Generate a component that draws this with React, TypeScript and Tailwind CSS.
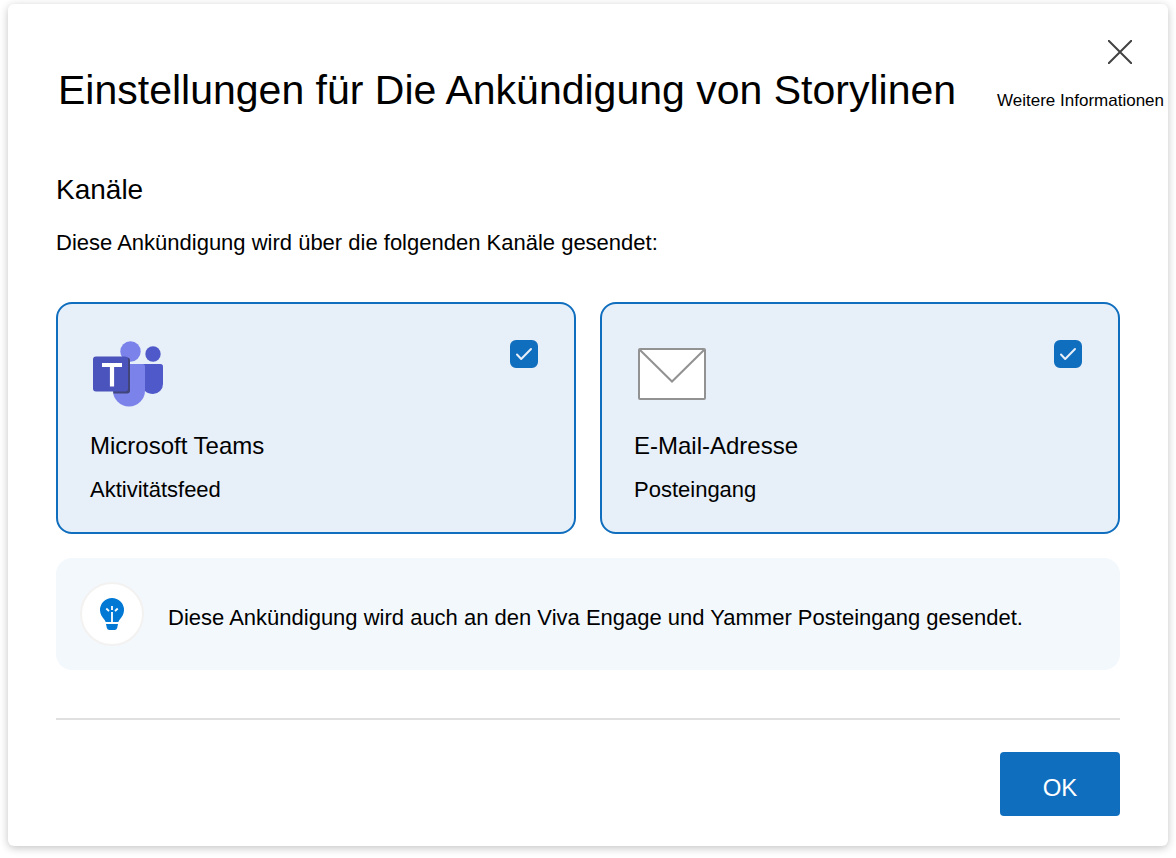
import { useState } from "react";
import type { ReactNode } from "react";

interface ChannelCardProps {
  id: string;
  title: string;
  subtitle: string;
  icon: ReactNode;
}

function TeamsIcon() {
  return (
    <svg width="72" height="68" viewBox="0 0 72 68" aria-hidden="true">
      <circle cx="61" cy="14" r="7.7" fill="#5059c9" />
      <path d="M50 24h18.500a2.500 2.500 0 0 1 2.500 2.500V44a10 10 0 0 1-10 10c-6 0-11-4-11-10z" fill="#5059c9" />
      <circle cx="38.500" cy="11.500" r="10.200" fill="#7b83eb" />
      <path d="M21 24h29.500a2.500 2.500 0 0 1 2.500 2.500V50.500a16 16 0 0 1-32 0z" fill="#7b83eb" />
      <path d="M21 17.500h14a3 3 0 0 1 3 3V50.500a3 3 0 0 1-3 3H21.300z" fill="#414579" />
      <rect x="1" y="16.500" width="35" height="35" rx="3" fill="#4b53bc" />
      <path d="M10 23h20v4h-7.900v19.500h-4.200V27H10z" fill="#fff" />
    </svg>
  );
}

function MailIcon() {
  return (
    <svg width="68" height="52" viewBox="0 0 68 52" fill="none" stroke="#929292" strokeWidth="2" aria-hidden="true">
      <rect x="1" y="1" width="66" height="50" rx="1" fill="#fff" />
      <path d="M2 2l32 31.500L66 2" />
    </svg>
  );
}

function BulbIcon() {
  return (
    <svg width="24" height="32" viewBox="0 0 24 32" aria-hidden="true">
      <path d="M12 0a12 12 0 0 1 12 12c0 4-2 6.800-4 9.200-1 1.200-1.300 1.800-1.600 2.800H5.600c-.3-1-.6-1.600-1.600-2.800C2 18.800 0 16 0 12A12 12 0 0 1 12 0z" fill="#0078d4" />
      <path d="M6 26h12l-.8 3.800A2.800 2.800 0 0 1 14.500 32h-5a2.800 2.800 0 0 1-2.700-2.200z" fill="#0078d4" />
      <path d="M12 14v10M12 8v4M6.300 10.500l2.700 2.700M17.700 10.500L15 13.200" stroke="#fff" strokeWidth="1.800" fill="none" />
    </svg>
  );
}

function ChannelCard({ id, title, subtitle, icon }: ChannelCardProps) {
  const [checked, setChecked] = useState(true);

  return (
    <label
      htmlFor={id}
      className="flex cursor-pointer flex-col rounded-2xl border-2 border-[#106ebe] bg-[#e7eff8] px-8 pt-9 pb-[26px]"
    >
      <span className="flex items-start justify-between pr-1">
        <span className="flex h-[68px] w-19 items-center justify-center">{icon}</span>
        <span className="grid">
          <input
            id={id}
            type="checkbox"
            checked={checked}
            onChange={(e) => setChecked(e.target.checked)}
            className="peer col-start-1 row-start-1 size-7 appearance-none rounded-md border-2 border-[#106ebe] bg-white checked:bg-[#106ebe]"
          />
          <svg
            className="pointer-events-none invisible col-start-1 row-start-1 size-7 peer-checked:visible"
            viewBox="0 0 28 28"
            fill="none"
            stroke="#e7eff8"
            strokeWidth="2"
            strokeLinecap="round"
            strokeLinejoin="round"
            aria-hidden="true"
          >
            <path d="M7 14.500l4.200 4.500L21 9" />
          </svg>
        </span>
      </span>
      <span className="mt-[22px] text-[24px] leading-8">{title}</span>
      <span className="mt-3 text-[22px] leading-8">{subtitle}</span>
    </label>
  );
}

export default function App() {
  return (
    <div className="bg-white px-2 pt-1 pb-3 font-['Liberation_Sans',Arial,sans-serif] text-black">
      <main
        role="dialog"
        aria-labelledby="dialog-title"
        className="rounded-md bg-white pb-[30px] shadow-[0_2px_8px_rgba(0,0,0,0.24)]"
      >
        <header className="flex items-start justify-between pt-9 pr-1 pl-[50px]">
          <h1 id="dialog-title" className="pt-6 text-[41px] leading-[52px]">
            Einstellungen für Die Ankündigung von Storylinen
          </h1>
          <div className="flex shrink-0 flex-col items-end">
            <button type="button" aria-label="Schließen" className="mr-8 cursor-pointer">
              <svg width="24" height="24" viewBox="0 0 24 24" stroke="#424242" strokeWidth="2" aria-hidden="true">
                <path d="M0 0l24 24M24 0L0 24" />
              </svg>
            </button>
            <a href="#info" className="mt-[25px] text-[17px] leading-6">
              Weitere Informationen
            </a>
          </div>
        </header>

        <div className="px-12">
          <section className="pt-14">
            <h2 className="text-[28px] leading-9">Kanäle</h2>
            <p className="mt-[21px] text-[22px] leading-7">
              Diese Ankündigung wird über die folgenden Kanäle gesendet:
            </p>
            <div className="mt-[45px] grid grid-cols-2 gap-6">
              <ChannelCard id="teams" title="Microsoft Teams" subtitle="Aktivitätsfeed" icon={<TeamsIcon />} />
              <ChannelCard id="mail" title="E-Mail-Adresse" subtitle="Posteingang" icon={<MailIcon />} />
            </div>
          </section>

          <div className="mt-6 flex items-center gap-6 rounded-2xl bg-[#f3f8fd] px-6 py-6">
            <span className="flex size-16 shrink-0 items-center justify-center rounded-full border-2 border-[#f3f2f1] bg-white">
              <BulbIcon />
            </span>
            <p className="pt-2 text-[22px] leading-8">
              Diese Ankündigung wird auch an den Viva Engage und Yammer Posteingang gesendet.
            </p>
          </div>

          <footer className="mt-12 flex justify-end border-t-2 border-[#e0e0e0] pt-8">
            <button
              type="button"
              className="h-16 w-[120px] cursor-pointer rounded bg-[#106ebe] pt-2 text-[24px] leading-8 text-white"
            >
              OK
            </button>
          </footer>
        </div>
      </main>
    </div>
  );
}
